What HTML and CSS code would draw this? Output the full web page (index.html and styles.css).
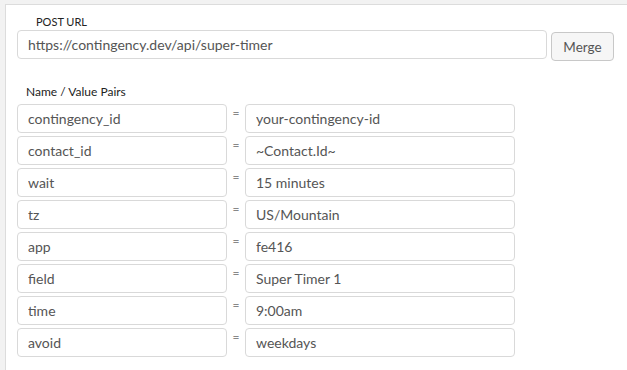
FILE: index.html
```html
<!DOCTYPE html>
<html lang="en">
<head>
  <meta charset="UTF-8" />
  <title>Webhook</title>
  <link rel="stylesheet" href="styles.css">
</head>
<body>
  <div class="panel">
    <div class="label post-label">POST URL</div>
    <div class="url-row">
      <input class="field url-field" type="text" value="https://contingency.dev/api/super-timer" />
      <button class="merge-btn">Merge</button>
    </div>
    <div class="label pairs-label">Name / Value Pairs</div>
    <div class="pairs">
      <div class="pair">
        <input class="field name-field" type="text" value="contingency_id" />
        <span class="eq">=</span>
        <input class="field value-field" type="text" value="your-contingency-id" />
      </div>
      <div class="pair">
        <input class="field name-field" type="text" value="contact_id" />
        <span class="eq">=</span>
        <input class="field value-field" type="text" value="~Contact.Id~" />
      </div>
      <div class="pair">
        <input class="field name-field" type="text" value="wait" />
        <span class="eq">=</span>
        <input class="field value-field" type="text" value="15 minutes" />
      </div>
      <div class="pair">
        <input class="field name-field" type="text" value="tz" />
        <span class="eq">=</span>
        <input class="field value-field" type="text" value="US/Mountain" />
      </div>
      <div class="pair">
        <input class="field name-field" type="text" value="app" />
        <span class="eq">=</span>
        <input class="field value-field" type="text" value="fe416" />
      </div>
      <div class="pair">
        <input class="field name-field" type="text" value="field" />
        <span class="eq">=</span>
        <input class="field value-field" type="text" value="Super Timer 1" />
      </div>
      <div class="pair">
        <input class="field name-field" type="text" value="time" />
        <span class="eq">=</span>
        <input class="field value-field" type="text" value="9:00am" />
      </div>
      <div class="pair">
        <input class="field name-field" type="text" value="avoid" />
        <span class="eq">=</span>
        <input class="field value-field" type="text" value="weekdays" />
      </div>
    </div>
  </div>
</body>
</html>
```

FILE: styles.css
```css
body {
  margin: 0;
  background: #f2f2f2;
  font-family: 'Lato', 'Open Sans', sans-serif;
  overflow: hidden;
  height: 370px;
}
.panel {
  box-sizing: border-box;
  height: 366px;
  margin: 4px -20px 0 5px;
  background: #fff;
  border: 1px solid #dcdcdc;
  border-right: none;
  border-bottom: none;
  padding: 10px 0 0 11px;
}
.label {
  font-size: 11px;
  line-height: 14px;
  color: #222;
}
.post-label {
  margin: 0 0 1px 19px;
}
.url-row {
  display: flex;
  align-items: flex-start;
  gap: 4px;
}
.field {
  box-sizing: border-box;
  height: 29px;
  border: 1px solid #d9d9d9;
  border-radius: 4px;
  padding: 0 10px;
  font-family: inherit;
  font-size: 14px;
  color: #555;
  background: #fff;
  outline: none;
}
.url-field {
  width: 530px;
}
.merge-btn {
  box-sizing: border-box;
  margin-top: 2px;
  width: 63px;
  height: 29px;
  border: 1px solid #c8c8c8;
  border-radius: 4px;
  background: #f6f6f6;
  font-family: inherit;
  font-size: 13.5px;
  color: #555;
  padding: 0;
}
.pairs-label {
  margin: 24px 0 5px 9px;
  font-size: 12px;
}
.pairs {
  display: flex;
  flex-direction: column;
  gap: 3px;
}
.pair {
  display: flex;
  align-items: flex-start;
}
.name-field {
  width: 210px;
}
.eq {
  width: 18px;
  text-align: center;
  font-size: 12px;
  line-height: 18px;
  color: #888;
}
.value-field {
  width: 270px;
}
```
